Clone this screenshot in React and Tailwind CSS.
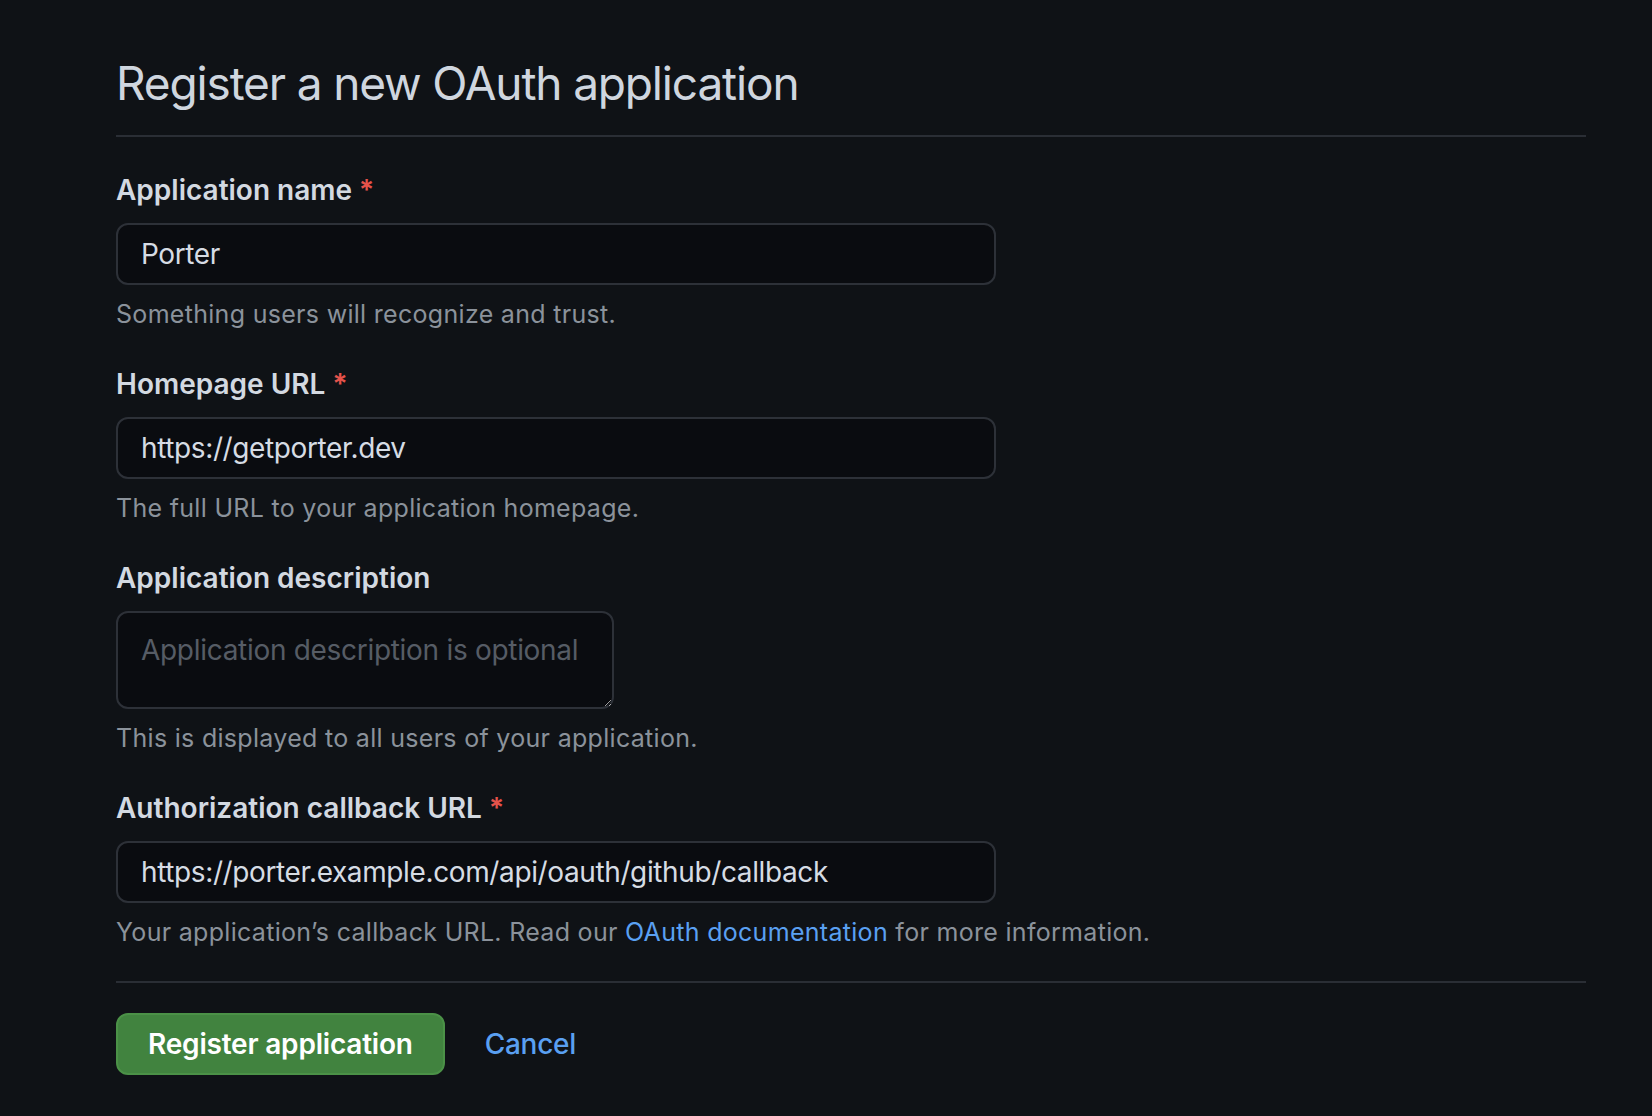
const TextInput = ({ value }) => (
  <input
    type="text"
    defaultValue={value}
    className="block w-[880px] h-[62px] rounded-[12px] border-2 border-[#2d3138] bg-[#0a0c10] px-[23px] text-[28px] tracking-[-0.38px] text-[#d6dce4] outline-none scheme-dark"
  />
);

const Field = ({ label, required, note, first, children }) => (
  <div className={first ? "mt-[32px]" : "mt-[31px]"}>
    <label className="block text-[28px] leading-[42px] font-semibold text-[#d3d9e1] mb-[12px]">
      {label}
      {required && <span className="text-[#e5534b]"> *</span>}
    </label>
    {children}
    <p className="mt-[11px] text-[25px] leading-[36px] tracking-[0.3px] text-[#8b929b]">{note}</p>
  </div>
);

export default function App() {
  return (
    <div className="min-h-screen bg-[#0f1216] font-['Inter','Noto_Sans',sans-serif] pt-[47px] pl-[116px]">
      <div className="w-[1470px]">
        <h1 className="text-[46px] leading-[72px] font-normal tracking-[-0.025em] text-[#cfd6df] pb-[16px] border-b-2 border-[#2a2e35]">
          Register a new OAuth application
        </h1>

        <form>
          <Field
            first
            label="Application name"
            required
            note="Something users will recognize and trust."
          >
            <TextInput value="Porter" />
          </Field>

          <Field
            label="Homepage URL"
            required
            note="The full URL to your application homepage."
          >
            <TextInput value="https://getporter.dev" />
          </Field>

          <Field
            label="Application description"
            note="This is displayed to all users of your application."
          >
            <textarea
              placeholder="Application description is optional"
              className="block w-[498px] h-[98px] rounded-[12px] border-2 border-[#2d3138] bg-[#0a0c10] px-[23px] pt-[16px] text-[28px] leading-[42px] tracking-[-0.3px] text-[#d6dce4] placeholder:text-[#565c65] outline-none scheme-dark"
            />
          </Field>

          <Field
            label="Authorization callback URL"
            required
            note={
              <>
                Your application’s callback URL. Read our{" "}
                <a href="#" className="text-[#5aa0f2]">
                  OAuth documentation
                </a>{" "}
                for more information.
              </>
            }
          >
            <TextInput value="https://porter.example.com/api/oauth/github/callback" />
          </Field>

          {/* Actions */}
          <div className="mt-[31px] border-t-2 border-[#2a2e35] pt-[30px] flex items-center gap-[40px]">
            <button
              type="button"
              className="h-[62px] px-[30px] rounded-[12px] border-2 border-[#4b9147] bg-[#41833f] text-[28px] font-semibold tracking-[-0.2px] text-white"
            >
              Register application
            </button>
            <a href="#" className="text-[28px] font-medium tracking-[-0.3px] text-[#5aa0f2]">
              Cancel
            </a>
          </div>
        </form>
      </div>
    </div>
  );
}
